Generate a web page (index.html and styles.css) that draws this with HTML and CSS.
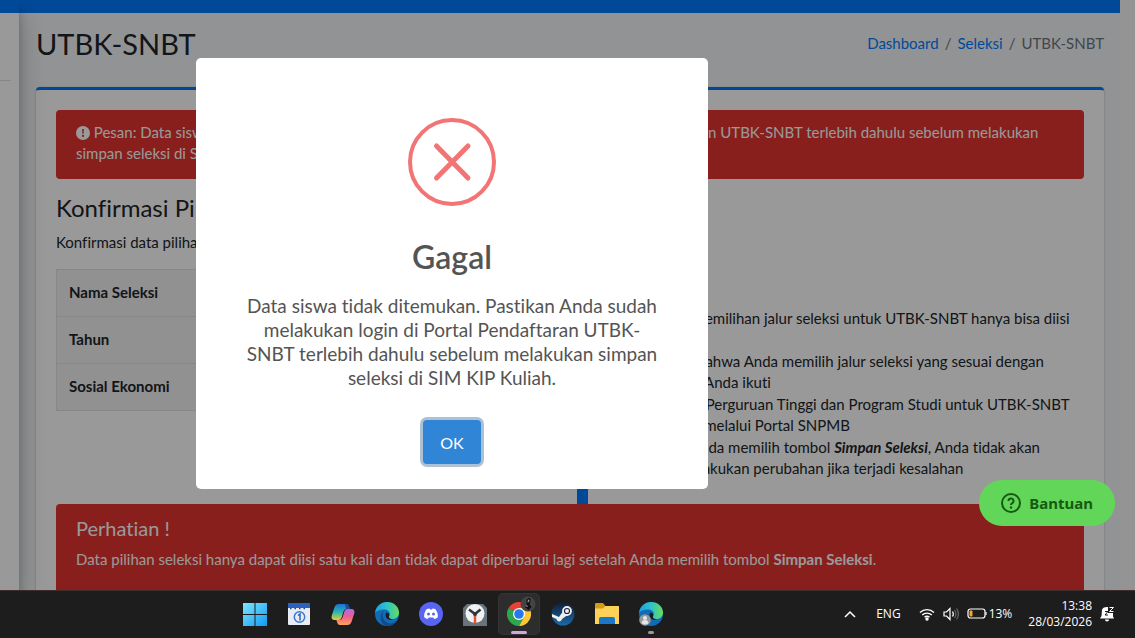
FILE: index.html
```
<!DOCTYPE html>
<html lang="id">
	<head>
		<meta charset="UTF-8"/>
		<meta name="viewport" content="width=device-width, initial-scale=1">
		<title>UTBK-SNBT</title>
		<link rel="stylesheet" href="styles.css">
	</head>
	<body>
		<div class="browser">
			<aside class="sidebar">
				<div class="brand"></div>
				<hr>
			</aside>
			<div class="wrapper">
				<nav class="navbar"></nav>
				<main class="content">
					<header class="content-header">
						<h1>UTBK-SNBT</h1>
						<ol class="breadcrumb">
							<li><a href="#">Dashboard</a></li>
							<li><a href="#">Seleksi</a></li>
							<li>UTBK-SNBT</li>
						</ol>
					</header>
					<section class="card">
						<div class="alert">
							<svg class="alert-icon" viewBox="0 0 16 16"><circle cx="8" cy="8" r="8" fill="#fff"/><path d="M7 3.500h2l-.3 5.300H7.300z" fill="#e3342f"/><circle cx="8" cy="11.300" r="1.300" fill="#e3342f"/></svg>
							Pesan: Data siswa tidak ditemukan. Pastikan Anda sudah melakukan login di Portal Pendaftaran UTBK-SNBT terlebih dahulu sebelum melakukan simpan seleksi di SIM KIP Kuliah.
						</div>
						<div class="columns">
							<div class="confirm">
								<h2>Konfirmasi Pilihan Seleksi</h2>
								<p>Konfirmasi data pilihan seleksi Anda</p>
								<table>
									<tr><th scope="row">Nama Seleksi</th><td></td></tr>
									<tr><th scope="row">Tahun</th><td></td></tr>
									<tr><th scope="row">Sosial Ekonomi</th><td></td></tr>
								</table>
							</div>
							<div class="notes">
								<ul>
									<li>Tahapan pemilihan jalur seleksi untuk UTBK-SNBT hanya bisa diisi<br>&nbsp;</li>
									<li>Pastikan bahwa Anda memilih jalur seleksi yang sesuai dengan<br>jalur yang Anda ikuti</li>
									<li>Pemilihan Perguruan Tinggi dan Program Studi untuk UTBK-SNBT<br>dilakukan melalui Portal SNPMB</li>
									<li>Setelah Anda memilih tombol <b><i>Simpan Seleksi</i></b>, Anda tidak akan<br>dapat melakukan perubahan jika terjadi kesalahan</li>
								</ul>
							</div>
						</div>
						<div class="alert warning">
							<h3>Perhatian !</h3>
							<p>Data pilihan seleksi hanya dapat diisi satu kali dan tidak dapat diperbarui lagi setelah Anda memilih tombol <b>Simpan Seleksi</b>.</p>
						</div>
					</section>
				</main>
			</div>
			<div class="overlay">
				<div class="popup" role="dialog" aria-labelledby="popupTitle">
					<svg class="popup-icon" viewBox="0 0 88 88" fill="none" stroke="#f27474"><circle cx="44" cy="44" r="42" stroke-width="4"/><path d="M28.500 28L60 60M60 28L28.500 60" stroke-width="5" stroke-linecap="round"/></svg>
					<h2 id="popupTitle">Gagal</h2>
					<p>Data siswa tidak ditemukan. Pastikan Anda sudah melakukan login di Portal Pendaftaran UTBK-SNBT terlebih dahulu sebelum melakukan simpan seleksi di SIM KIP Kuliah.</p>
					<button type="button" class="popup-ok">OK</button>
				</div>
			</div>
			<button type="button" class="help">
				<svg viewBox="0 0 20 20" fill="none" stroke="#175a12" stroke-width="2"><circle cx="10" cy="10" r="9"/><path d="M7.500 8a2.500 2.500 0 1 1 3.700 2.200c-.8.5-1.200.8-1.200 1.800"/><circle cx="10" cy="14.500" r="1.200" fill="#175a12" stroke="none"/></svg>
				Bantuan
			</button>
		</div>

		<footer class="taskbar">
			<div class="apps">
				<button type="button" aria-label="Start">
					<svg viewBox="0 0 24 24"><defs><linearGradient id="win" x1="0" y1="0" x2="1" y2="1"><stop offset="0" stop-color="#7de6fd"/><stop offset="1" stop-color="#1299f4"/></linearGradient></defs><path d="M0 1h11.500v11H0zM12.500 1H24v11H12.500zM0 13h11.500v11H0zM12.500 13H24v11H12.500z" fill="url(#win)"/></svg>
				</button>
				<button type="button" aria-label="Kalender">
					<svg viewBox="0 0 24 24"><rect x="1" y="1" width="22" height="22" rx="1" fill="#e9edf3"/><path d="M1 1h22v5H1z" fill="#2c62bd"/><path d="M3 6.500h18" stroke="#17488f" stroke-width="1.500" stroke-dasharray="1.500 3"/><circle cx="12.500" cy="15" r="5.200" fill="none" stroke="#3b78cf" stroke-width="1.500"/><path d="M11 13.500l2-1.500v6.500" fill="none" stroke="#2463bd" stroke-width="1.500"/></svg>
				</button>
				<button type="button" aria-label="Copilot">
					<svg viewBox="0 0 24 24"><defs><linearGradient id="cpa" x1="0" y1="0" x2="0" y2="1"><stop offset="0" stop-color="#1b72d3"/><stop offset=".5" stop-color="#28b4b5"/><stop offset="1" stop-color="#e9ce2b"/></linearGradient><linearGradient id="cpb" x1="0" y1="0" x2="0" y2="1"><stop offset="0" stop-color="#b166e8"/><stop offset=".5" stop-color="#f0608f"/><stop offset="1" stop-color="#ffa455"/></linearGradient></defs><path d="M8 2h7c2 0 2.500 1.500 3 3l.6 2h-3.100c-2 0-2.700 1.500-3.200 3l-1.500 5c-.6 2-1.300 3-3.300 3H4c-3 0-4-2-3.200-4.500l2.600-8C4.300 3 5.500 2 8 2z" fill="url(#cpa)"/><path d="M16 23H9c-2 0-2.500-1.500-3-3l-.6-2h3.100c2 0 2.700-1.500 3.200-3l1.500-5c.6-2 1.300-3 3.300-3H20c3 0 4 2 3.200 4.500l-2.600 8C19.700 22 18.500 23 16 23z" fill="url(#cpb)"/><path d="M14 2h2c1.500 0 2 1.500 2.500 3l.6 2h-4z" fill="#174ba5"/></svg>
				</button>
				<button type="button" aria-label="Edge">
					<svg viewBox="0 0 24 24"><defs><linearGradient id="edg" x1="0" y1="0" x2="1" y2="0"><stop offset="0" stop-color="#229fdf"/><stop offset=".5" stop-color="#2bc3c9"/><stop offset="1" stop-color="#6add59"/></linearGradient></defs><circle cx="12" cy="12" r="12" fill="#126bb8"/><path d="M0 11C1 4 6 0 12 0c7 0 12 5 12 10.500 0 4-3 6.500-6.500 6.500-3 0-4-1.500-3.500-2.500 2-2.500.5-6.500-4-7C5.500 7.100 2 8.500 0 11z" fill="url(#edg)"/><path d="M9 9c-3 4-1 10 4 12 3 1 6.500 0 9-3-2.500 4.500-7 6.500-11 5.900C4.500 22.500 4 11 9 9z" fill="#124b8a"/><path d="M11 11c2-1 4 1 3 3.500-.6 1.500 1.500 2.800 4 3-3 1.500-9-1-7-6.500z" fill="#1d1d1d"/></svg>
				</button>
				<button type="button" aria-label="Discord">
					<svg viewBox="0 0 24 24"><circle cx="12" cy="12" r="12" fill="#5865f2"/><path d="M7.500 7.200c1-.5 2-.7 3-.8l.5 1h2l.5-1c1 .1 2 .3 3 .8 1.800 2.500 2.600 5 2.300 8-1.200 1-2.400 1.500-3.600 1.800l-.9-1.400H9.700L8.800 17c-1.200-.3-2.400-.8-3.600-1.800-.3-3 .5-5.500 2.300-8z" fill="#fff"/><circle cx="9.500" cy="12" r="1.500" fill="#5865f2"/><circle cx="14.500" cy="12" r="1.500" fill="#5865f2"/></svg>
				</button>
				<button type="button" aria-label="Jam">
					<svg viewBox="0 0 24 24"><path d="M4 2h16l4 4v18H0V6z" fill="#69737b"/><circle cx="12" cy="11.500" r="9.500" fill="#eff1f3"/><path d="M12 12L6 7.500M12 12l5.500-4.500" stroke="#30363b" stroke-width="2.500"/><path d="M12 12v9" stroke="#e25532" stroke-width="2.500"/><circle cx="12" cy="12" r="2" fill="#30363b"/></svg>
				</button>
				<button type="button" class="active" aria-label="Chrome">
					<svg viewBox="0 0 24 24"><path d="M12 12L1.600 6A12 12 0 0 1 22.400 6z" fill="#e94235"/><path d="M12 12L1.600 6A12 12 0 0 0 12 24l5.200-9z" fill="#2ea64e"/><path d="M22.400 6H12l5.200 9L12 24A12 12 0 0 0 22.400 6z" fill="#fcc934"/><circle cx="12" cy="12" r="6" fill="#fff"/><circle cx="12" cy="12" r="4.800" fill="#2878ed"/></svg>
					<svg class="profile" viewBox="0 0 16 16"><circle cx="8" cy="8" r="7.500" fill="#444"/><path d="M8.500 2c2 0 2.500 1.500 2 3L9.500 8l2 3-3 3-3.500-3 1.500-3V4z" fill="#111"/><path d="M8 3.500l1.500.5-.5 2-1.500.5zM5 10l2-1 1 2z" fill="#999"/></svg>
				</button>
				<button type="button" aria-label="Steam">
					<svg viewBox="0 0 24 24"><defs><linearGradient id="stm" x1="0" y1="0" x2="0" y2="1"><stop offset="0" stop-color="#111e38"/><stop offset="1" stop-color="#1a6aa8"/></linearGradient></defs><circle cx="12" cy="12" r="11.500" fill="url(#stm)"/><path d="M1 12l7 3 5-7 5 4-7 5c-.5 3-5 3.500-5.500 0L1 15z" fill="#eee"/><circle cx="16" cy="9" r="4" fill="#16233f" stroke="#eee" stroke-width="1.800"/><circle cx="16" cy="9" r="2" fill="#eee"/></svg>
				</button>
				<button type="button" aria-label="File Explorer">
					<svg viewBox="0 0 24 24"><path d="M0 2.500C0 1.500.5 1 1.500 1H8l2.500 3H23c.7 0 1 .3 1 1v5H0z" fill="#d49b17"/><path d="M0 6.500h8L10.500 4H23c.7 0 1 .3 1 1v17H0z" fill="#fdd258"/><path d="M4 22v-5c0-1.300.7-2 2-2h12c1.300 0 2 .7 2 2v5z" fill="#1978ca"/></svg>
				</button>
				<button type="button" class="running" aria-label="Edge, profil">
					<svg viewBox="0 0 24 24"><circle cx="12" cy="12" r="12" fill="#126bb8"/><path d="M0 11C1 4 6 0 12 0c7 0 12 5 12 10.500 0 4-3 6.500-6.500 6.500-3 0-4-1.500-3.500-2.500 2-2.500.5-6.500-4-7C5.500 7.100 2 8.500 0 11z" fill="url(#edg)"/><path d="M11 11c2-1 4 1 3 3.500-.6 1.500 1.500 2.800 4 3-3 1.500-9-1-7-6.500z" fill="#1d1d1d"/><circle cx="6" cy="18" r="5.800" fill="#969899"/><circle cx="6" cy="16" r="2" fill="#e5e5e5"/><path d="M2.500 21c0-4 7-4 7 0-2 2-5 2-7 0z" fill="#e5e5e5"/></svg>
				</button>
			</div>
			<div class="tray">
				<svg class="chevron" viewBox="0 0 12 12" fill="none" stroke="#fff" stroke-width="1.500"><path d="M1 9l5-5 5 5"/></svg>
				<span class="lang">ENG</span>
				<svg class="wifi" viewBox="0 0 16 14" fill="none" stroke="#fff" stroke-width="1.400"><path d="M1 5.500a10 10 0 0 1 14 0M3.200 8a7 7 0 0 1 9.600 0M5.500 10.300a4 4 0 0 1 5 0"/><circle cx="8" cy="12" r="1" fill="#fff"/></svg>
				<svg class="sound" viewBox="0 0 16 14" fill="none" stroke="#fff" stroke-width="1.200"><path d="M1 5h2.500L7 1.500v11L3.500 9H1zM9.500 4.500c1 1.500 1 3.500 0 5"/><path d="M11.500 3c1.800 2.500 1.800 5.500 0 8M13.500 1.500c2.500 3.500 2.500 7.500 0 11" stroke="#666"/></svg>
				<svg class="battery" viewBox="0 0 20 12" fill="none"><rect x="1" y="1" width="17" height="9" rx="2.500" stroke="#fff" stroke-width="1.200"/><path d="M19 4v3" stroke="#fff" stroke-width="1.200"/><rect x="2.500" y="2.500" width="3" height="6" rx="1" fill="#f2a72c"/></svg>
				<span class="percent">13%</span>
				<time class="clock">13:38<br>28/03/2026</time>
				<svg class="bell" viewBox="0 0 15 16"><path d="M2 3.500C3 1.500 5 .8 8 1v6h5v3.500l1 2H0l1.500-2.500zM5 13.500h4a2 2 0 0 1-4 0z" fill="#fff"/><path d="M9.500 1.500h4l-4 4h4" fill="none" stroke="#fff"/><path d="M5 5.500h3L5 9h3" fill="none" stroke="#1d1d1d"/></svg>
			</div>
		</footer>
	</body>
</html>
```
FILE: styles.css
```
*{
	box-sizing:border-box;
}
body{
	margin:0;
	height:100vh;
	display:flex;
	flex-direction:column;
	overflow:hidden;
	font-family:Lato, "Liberation Sans", sans-serif;
	font-size:15px;
	line-height:21px;
	font-variant-ligatures:none;
	color:#212529;
	background:#f7f7f7;
}
h1,h2,h3,p,ul,ol{
	margin:0;
	padding:0;
	font-weight:400;
}
button{
	border:0;
	padding:0;
	font-family:inherit;
	cursor:pointer;
}
a{
	color:#007bff;
	text-decoration:none;
}

/* page */
.browser{
	position:relative;
	flex:1;
	min-height:0;
	display:flex;
	overflow:hidden;
	padding-right:15px;
}
.sidebar{
	width:19px;
	flex:none;
	background:#fff;
	box-shadow:0 14px 28px rgba(0,0,0,.25), 0 10px 10px rgba(0,0,0,.22);
	z-index:1;
}
.brand,.navbar{
	height:13px;
	background:#007bff;
}
.sidebar hr{
	margin:67px 8px 0 0;
	border:0;
	border-top:1px solid #dee2e6;
}
.wrapper{
	flex:1;
	min-width:0;
	background:#f4f6f9;
}
.content{
	padding:0 16px 0 17px;
}
.content-header{
	display:flex;
	justify-content:space-between;
	align-items:flex-start;
	padding:13px 0 25px;
}
.content-header h1{
	font-size:29px;
	line-height:36px;
}
.breadcrumb{
	display:flex;
	list-style:none;
	padding-top:7px;
	color:#6c757d;
}
.breadcrumb li + li::before{
	content:"/";
	padding:0 6px;
}
.card{
	padding:20px 20px 40px;
	background:#fff;
	border-top:3px solid #007bff;
	border-radius:4px;
	box-shadow:0 0 1px rgba(0,0,0,.13), 0 1px 3px rgba(0,0,0,.2);
}
.alert{
	padding:12px 20px 15px;
	color:#fff;
	background:#e3342f;
	border-radius:4px;
}
.alert-icon{
	width:14px;
	height:14px;
	vertical-align:-2px;
}
.columns{
	display:grid;
	grid-template-columns:521px 1fr;
	padding-top:8px;
}
.confirm{
	padding:6px 20px 0 0;
}
.confirm h2{
	font-size:24px;
	line-height:30px;
	margin-bottom:9px;
}
.confirm table{
	width:100%;
	margin-top:16px;
	border-collapse:collapse;
}
.confirm th,.confirm td{
	height:47px;
	padding:0 12px 2px;
	border:1px solid #dee2e6;
	text-align:left;
}
.confirm th{
	width:200px;
	background:#f2f2f3;
}
.notes{
	padding:121px 0 24px 50px;
	border-left:11px solid #007bff;
}
.notes li{
	white-space:nowrap;
	margin-bottom:1px;
}
.warning{
	padding:10px 20px 30px;
}
.warning h3{
	font-size:20px;
	line-height:28px;
	margin-bottom:7px;
}

/* popup, centred on the part of the window right of the hidden menu */
.overlay{
	position:absolute;
	inset:0;
	z-index:2;
	padding:58px 231px 0 0;
	display:flex;
	justify-content:center;
	align-items:flex-start;
	background:rgba(0,0,0,.4);
}
.popup{
	width:512px;
	padding:60px 46px 25px;
	display:flex;
	flex-direction:column;
	align-items:center;
	text-align:center;
	color:#545454;
	background:#fff;
	border-radius:5px;
}
.popup-icon{
	width:88px;
	height:88px;
	margin-bottom:32px;
}
.popup h2{
	font-size:32px;
	font-weight:600;
	line-height:38px;
	margin-bottom:18px;
}
.popup p{
	font-size:19px;
	line-height:24px;
	margin-bottom:30px;
}
.popup-ok{
	width:58px;
	height:44px;
	font-size:16px;
	color:#fff;
	background:#3085d6;
	border-radius:4px;
	box-shadow:0 0 0 3px rgba(50,100,150,.4);
}
.help{
	position:absolute;
	right:20px;
	bottom:64px;
	z-index:3;
	display:flex;
	align-items:center;
	gap:8px;
	height:46px;
	padding:0 22px;
	font:bold 15px "Noto Sans", sans-serif;
	color:#175a12;
	background:#61d658;
	border-radius:23px;
}
.help svg{
	width:20px;
	height:20px;
}

/* taskbar */
.taskbar{
	flex:none;
	display:flex;
	justify-content:space-between;
	height:48px;
	padding:0 20px 0 235px;
	font-family:"Open Sans", "Noto Sans", sans-serif;
	font-size:12px;
	line-height:16px;
	color:#fff;
	background:#1d1d1d;
	box-shadow:inset 0 1px #3d2c2c;
}
.apps{
	display:flex;
	align-items:center;
	gap:4px;
}
.apps button{
	position:relative;
	width:40px;
	height:40px;
	display:flex;
	justify-content:center;
	align-items:center;
	background:none;
	border-radius:4px;
}
.apps svg{
	width:24px;
	height:24px;
}
.apps .active{
	background:#2d2d2d;
	box-shadow:0 0 0 1px #353535;
}
.apps .profile{
	position:absolute;
	top:2px;
	right:3px;
	width:16px;
	height:16px;
}
.active::after,.running::after{
	content:"";
	position:absolute;
	bottom:0;
	width:16px;
	height:3px;
	border-radius:2px;
	background:#d4a4dc;
}
.running::after{
	width:6px;
	background:#9a9a9a;
}
.tray{
	display:flex;
	align-items:center;
}
.chevron{
	width:12px;
	height:12px;
	margin-right:20px;
}
.lang{
	margin-right:18px;
}
.wifi,.sound{
	width:16px;
	height:14px;
	margin-right:8px;
}
.battery{
	width:20px;
	height:12px;
	margin-right:2px;
}
.percent{
	margin-right:16px;
}
.clock{
	text-align:right;
	margin-right:8px;
}
.bell{
	width:15px;
	height:16px;
}
```
